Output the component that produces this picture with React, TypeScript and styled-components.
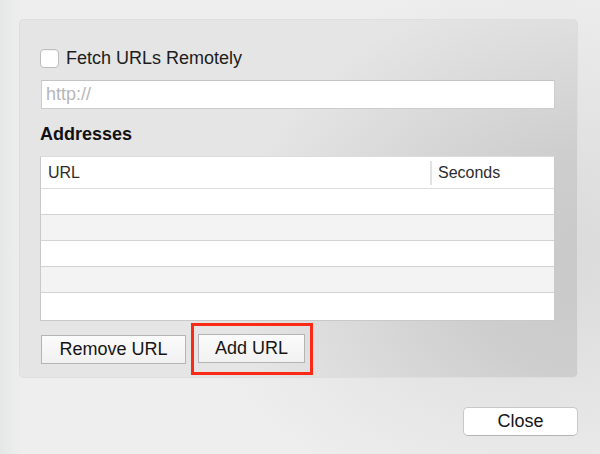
import React from 'react';
import styled, { createGlobalStyle } from 'styled-components';

const GlobalStyle = createGlobalStyle`
  html, body {
    margin: 0;
    padding: 0;
  }

  body {
    font-family: 'Liberation Sans', Arial, sans-serif;
    color: #1c1c1c;
  }

  * {
    box-sizing: border-box;
  }
`;

const Page = styled.div`
  width: 600px;
  height: 454px;
  overflow: hidden;
  padding: 19px 22px 0 19px;
  background:
    radial-gradient(ellipse 360px 280px at 540px 250px, rgba(200, 200, 200, 0.55), rgba(236, 236, 236, 0) 100%),
    linear-gradient(90deg, #e6e8e8 0px, #eeeeee 22px),
    #eeeeee;
  display: flex;
  flex-direction: column;
`;

const Panel = styled.section`
  height: 359px;
  border-radius: 5px;
  border: 1px solid #dedede;
  padding: 28px 22px 0 20px;
  background:
    radial-gradient(ellipse 380px 290px at 590px 245px, #c8c8c8 0%, #cecece 40%, rgba(229, 229, 229, 0) 100%),
    #e5e5e5;
  display: flex;
  flex-direction: column;
`;

const CheckRow = styled.label`
  display: flex;
  align-items: center;
  gap: 7px;
  height: 20px;
  font-size: 18px;
  line-height: 20px;
`;

const CheckBox = styled.span`
  width: 19px;
  height: 19px;
  border-radius: 4px;
  border: 1px solid #bdbdbd;
  background: #ffffff;
  box-shadow: inset 0 1px 0 #f4f4f4;
`;

const UrlInput = styled.div`
  margin-top: 12px;
  margin-left: 1px;
  height: 29px;
  background: #ffffff;
  border: 1px solid #cccccc;
  border-top-color: #c4c4c4;
  padding-left: 4px;
  font-size: 18px;
  line-height: 27px;
  color: #b6b6b6;
`;

const SectionTitle = styled.h2`
  margin: 15px 0 0;
  font-size: 18px;
  font-weight: 700;
  line-height: 20px;
  color: #111111;
`;

const Table = styled.div`
  margin-top: 12px;
  background: #ffffff;
  border: 1px solid #c9c9c9;
  border-top-color: #dcdcdc;
`;

const HeaderRow = styled.div`
  display: grid;
  grid-template-columns: 1fr 124px;
  align-items: center;
  height: 32px;
  border-bottom: 1px solid #dddddd;
  font-size: 16px;
  color: #2c2c2c;
`;

const HeaderCell = styled.div<{ $divider?: boolean }>`
  padding-left: ${({ $divider }) => ($divider ? '6px' : '7px')};
  height: 24px;
  line-height: 24px;
  border-left: ${({ $divider }) => ($divider ? '2px solid #e2e2e2' : 'none')};
`;

const Row = styled.div<{ $striped: boolean; $last: boolean }>`
  height: ${({ $last }) => ($last ? '27px' : '26px')};
  background: ${({ $striped }) => ($striped ? '#f3f3f3' : '#ffffff')};
  border-bottom: ${({ $last }) => ($last ? 'none' : '1px solid #d3d3d3')};
`;

const ButtonRow = styled.div`
  margin: 2px 0 0 1px;
  display: flex;
  align-items: center;
  gap: 5px;
`;

const SquareButton = styled.button<{ $width: number }>`
  width: ${({ $width }) => $width}px;
  height: 29px;
  padding: 0;
  border: 1px solid #b4b4b4;
  background: linear-gradient(#fbfbfb, #f1f1f1);
  font-family: 'Liberation Sans', Arial, sans-serif;
  font-size: 18px;
  color: #151515;
`;

const Highlight = styled.div`
  border: 3px solid #fb2a17;
  padding: 8px 5px 9px 4px;
`;

const Footer = styled.div`
  margin-top: 29px;
  display: flex;
  justify-content: flex-end;
`;

const CloseButton = styled.button`
  width: 115px;
  height: 29px;
  padding: 0;
  border-radius: 5px;
  border: 1px solid #c8c8c8;
  border-bottom-color: #b4b4b4;
  background: #ffffff;
  font-family: 'Liberation Sans', Arial, sans-serif;
  font-size: 18px;
  color: #151515;
`;

function App() {
  const rows = [0, 1, 2, 3, 4];

  return (
    <>
      <GlobalStyle />
      <Page>
        <Panel>
          <CheckRow>
            <CheckBox />
            <span>Fetch URLs Remotely</span>
          </CheckRow>
          <UrlInput>http://</UrlInput>
          <SectionTitle>Addresses</SectionTitle>
          <Table>
            <HeaderRow>
              <HeaderCell>URL</HeaderCell>
              <HeaderCell $divider>Seconds</HeaderCell>
            </HeaderRow>
            {rows.map((item) => (
              <Row key={item} $striped={item % 2 === 1} $last={item === rows.length - 1} />
            ))}
          </Table>
          <ButtonRow>
            <SquareButton $width={145}>Remove URL</SquareButton>
            <Highlight>
              <SquareButton $width={107}>Add URL</SquareButton>
            </Highlight>
          </ButtonRow>
        </Panel>
        <Footer>
          <CloseButton>Close</CloseButton>
        </Footer>
      </Page>
    </>
  );
}

export default App;
